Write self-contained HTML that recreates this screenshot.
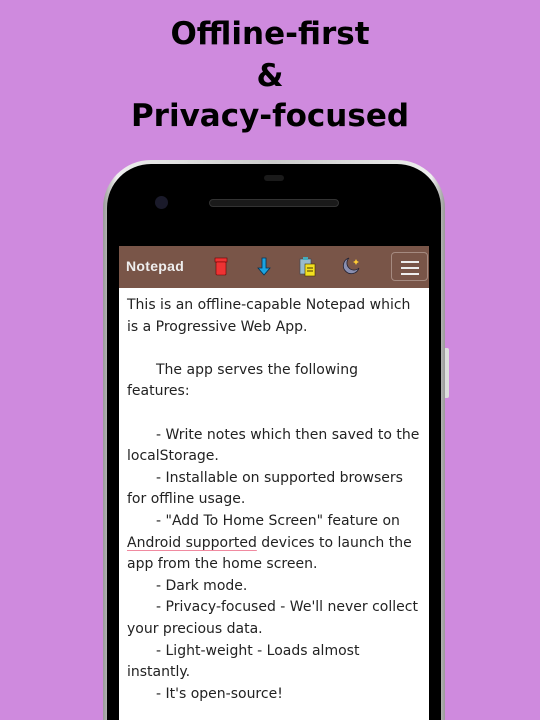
<!DOCTYPE html>
<html style="width:540px;height:720px;overflow:hidden"><head><style>
*{margin:0;padding:0;box-sizing:border-box}
body{width:540px;height:720px;background:#cf8ade;overflow:hidden;position:relative;font-family:"Liberation Sans",sans-serif}
.t{position:absolute;left:0;width:540px;text-align:center;font-weight:bold;font-size:31px;color:#000;font-family:"DejaVu Sans",sans-serif}
.phone{position:absolute;left:103px;top:160px;width:342px;height:560px;border-radius:48px 48px 0 0;background:linear-gradient(90deg,#9a9a9a,#eee 4%,#ccc 50%,#eee 96%,#9a9a9a);}
.inner{position:absolute;left:4px;top:4px;right:4px;bottom:0;border-radius:44px 44px 0 0;background:#000}
.btn{position:absolute;left:445px;top:348px;width:4px;height:50px;background:#ddd;border-radius:0 2px 2px 0}
.screen{position:absolute;left:119px;top:246px;width:310px;height:474px;background:#fff;overflow:hidden}
.hdr{height:42px;background:#795548;position:relative}
.hdr .n{position:absolute;left:7px;top:12px;color:#eee;font-weight:bold;font-size:14px;letter-spacing:.3px}
.menu{position:absolute;left:272px;top:6px;width:37px;height:29px;border:1px solid #a58a80;border-radius:4px}
.menu i{position:absolute;left:9px;width:18px;height:2px;background:#eee}
.txt{padding:7px 8px;line-height:21.6px;color:#222;font-family:"DejaVu Sans",sans-serif;font-size:14px}
.txt p{min-height:21.6px}
.in{padding-left:29px}
.u{text-decoration:underline;text-decoration-color:#f08aa0;text-underline-offset:3px}
</style></head><body>
<div class="t" style="top:16px">Offline-first</div>
<div class="t" style="top:58px">&amp;</div>
<div class="t" style="top:98px">Privacy-focused</div>
<div class="phone"><div class="inner"></div></div>
<div class="btn"></div>
<div style="position:absolute;left:264px;top:175px;width:20px;height:6px;border-radius:3px;background:#1a1a1a"></div>
<div style="position:absolute;left:209px;top:199px;width:130px;height:8px;border-radius:4px;background:#1a1a1a;border:1px solid #333"></div>
<div style="position:absolute;left:155px;top:196px;width:13px;height:13px;border-radius:50%;background:#1a1a2a"></div>
<div class="screen">
<div class="hdr"><span class="n">Notepad</span>
<svg style="position:absolute;left:94px;top:11px" width="16" height="20"><rect x="2" y="1" width="12" height="4" fill="#e33" stroke="#600" stroke-width=".6"/><rect x="3" y="5" width="10" height="13" rx="1" fill="#e33" stroke="#600" stroke-width=".6"/></svg>
<svg style="position:absolute;left:136px;top:11px" width="18" height="20"><path d="M7 1h4v10h4l-6 7-6-7h4z" fill="#1ba3e0" stroke="#035" stroke-width=".8"/></svg>
<svg style="position:absolute;left:180px;top:10px" width="18" height="22"><rect x="1" y="3" width="11" height="15" fill="#9bc" stroke="#345" stroke-width=".6"/><rect x="4" y="1" width="5" height="3" fill="#4ab"/><rect x="6" y="8" width="10" height="12" fill="#f3e020" stroke="#430" stroke-width=".6"/><path d="M8 12h6M8 15h6" stroke="#430"/></svg>
<svg style="position:absolute;left:222px;top:10px" width="20" height="20"><path d="M8 2a8 8 0 1 0 10 10a7 7 0 0 1-10-10z" fill="#8a8fb0" stroke="#223" stroke-width=".8"/><path d="M15 3l1 2 2 1-2 1-1 2-1-2-2-1 2-1z" fill="#fc3"/></svg>
<div class="menu"><i style="top:8px"></i><i style="top:14px"></i><i style="top:20px"></i></div>
</div>
<div class="txt">
<p>This is an offline-capable Notepad which is a Progressive Web App.</p>
<p></p>
<p><span class="in"></span>The app serves the following features:</p>
<p></p>
<p><span class="in"></span>- Write notes which then saved to the localStorage.</p>
<p><span class="in"></span>- Installable on supported browsers for offline usage.</p>
<p><span class="in"></span>- "Add To Home Screen" feature on <span class="u">Android supported</span> devices to launch the app from the home screen.</p>
<p><span class="in"></span>- Dark mode.</p>
<p><span class="in"></span>- Privacy-focused - We'll never collect your precious data.</p>
<p><span class="in"></span>- Light-weight - Loads almost instantly.</p>
<p><span class="in"></span>- It's open-source!</p>
</div>
</div>
</body></html>
